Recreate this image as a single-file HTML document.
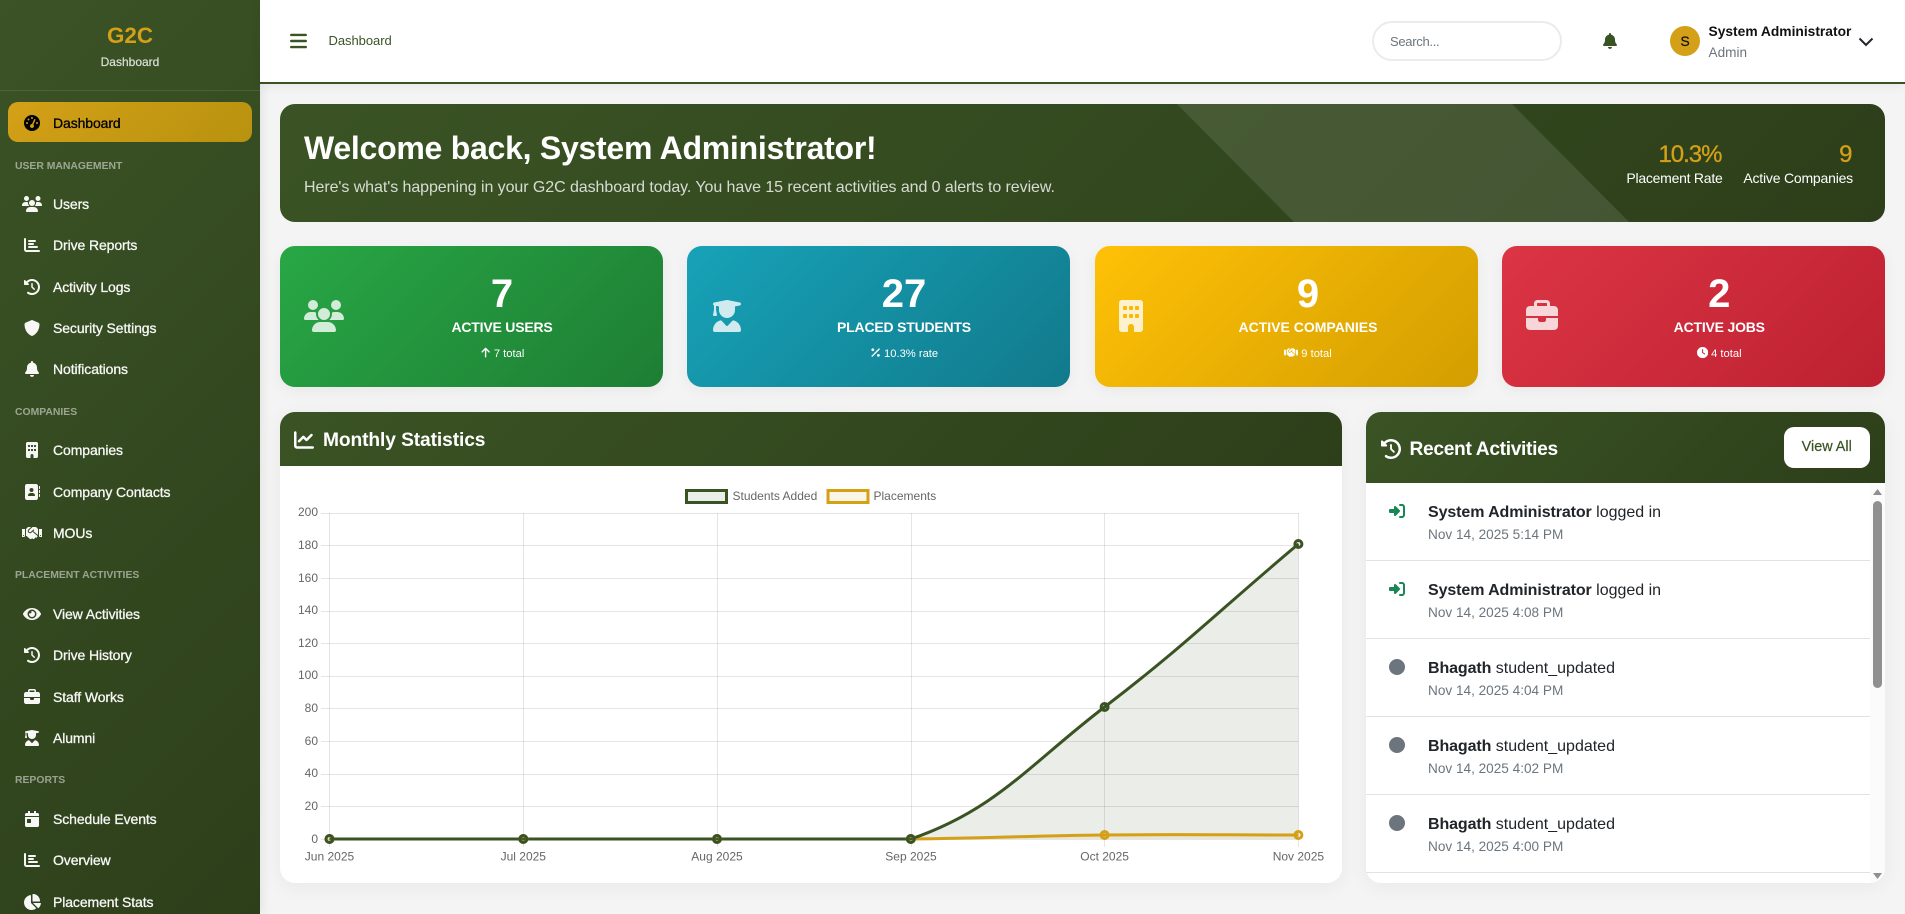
<!DOCTYPE html>
<html lang="en">
<head>
<meta charset="utf-8">
<title>G2C Dashboard</title>
<style>
*{box-sizing:border-box;margin:0;padding:0}
html,body{width:1905px;height:914px;overflow:hidden;background:#f4f4f4;font-family:"Liberation Sans",Arial,sans-serif}
.t{position:absolute;white-space:nowrap;height:20px;line-height:20px}
.side{position:absolute;left:0;top:0;width:260px;height:914px;background:linear-gradient(135deg,#3b5326,#2d3f1a);box-shadow:2px 0 10px rgba(0,0,0,.08);overflow:hidden}
.n{position:absolute;left:0;width:260px;height:20px;color:#fff;font-size:14px;line-height:20px;letter-spacing:-.1px;-webkit-text-stroke:.3px currentColor;opacity:.96}
.n svg{position:absolute;left:22px;top:2px;width:20px;height:16px;fill:currentColor;-webkit-text-stroke:0}
.n span{position:absolute;left:53px;top:0;white-space:nowrap}
.sec{position:absolute;left:15px;color:rgba(255,255,255,.5);font-size:10.4px;font-weight:bold;height:14px;line-height:14px;letter-spacing:0;white-space:nowrap}
.top{position:absolute;left:260px;top:0;width:1645px;height:84px;background:#fff;border-bottom:2px solid #3a5323;box-shadow:0 2px 10px rgba(0,0,0,.06)}
.hero{position:absolute;left:280px;top:104px;width:1605px;height:118px;border-radius:15px;background:linear-gradient(135deg,#3a5324,#2d3f1a);overflow:hidden}
.card{position:absolute;top:246px;width:383.25px;height:141px;border-radius:15px;color:#fff;box-shadow:0 4px 15px rgba(0,0,0,.05)}
.card>svg.ic{position:absolute;top:54px;height:32px;fill:rgba(255,255,255,.8)}
.num{position:absolute;top:28px;left:0;text-align:center;font-size:40px;font-weight:bold;line-height:40px;height:40px}
.lab{position:absolute;top:71px;left:0;text-align:center;font-size:14px;font-weight:bold;line-height:20px;white-space:nowrap;letter-spacing:-.2px}
.sub{position:absolute;top:98px;left:0;text-align:center;font-size:11.2px;line-height:20px;white-space:nowrap}
.sub svg{height:11.2px;width:11.2px;fill:#fff;vertical-align:-1.5px;margin-right:3px}
.panel{position:absolute;background:#fff;border-radius:15px;box-shadow:0 4px 20px rgba(0,0,0,.05);overflow:hidden}
.ph{position:absolute;left:0;top:0;width:100%;background:linear-gradient(135deg,#3a5324,#2d3f1a)}
.name{position:absolute;left:1428px;font-size:16px;color:#212529;white-space:nowrap;height:20px;line-height:20px}
.name b{letter-spacing:-.1px}
.time{position:absolute;left:1428px;font-size:13.6px;color:#6c757d;white-space:nowrap;height:20px;line-height:20px}
.sep{position:absolute;left:1366px;width:504px;height:1px;background:#dfe2e6}
.a-i{position:absolute;left:1389px;width:16px;height:16px;fill:#198754}
.dot{position:absolute;left:1389px;width:16px;height:16px;border-radius:50%;background:#6c757d}
</style>
</head>
<body>
<svg width="0" height="0" style="position:absolute">
<symbol id="gauge" viewBox="0 0 512 512"><path d="M0 256a256 256 0 1 1 512 0A256 256 0 1 1 0 256zM288 96a32 32 0 1 0 -64 0 32 32 0 1 0 64 0zM256 416c35.3 0 64-28.7 64-64c0-17.4-6.9-33.1-18.1-44.6L366 161.7c5.3-12.1-.2-26.3-12.3-31.6s-26.3 .2-31.6 12.3L257.9 288c-.6 0-1.3 0-1.9 0c-35.3 0-64 28.7-64 64s28.7 64 64 64zM176 144a32 32 0 1 0 -64 0 32 32 0 1 0 64 0zM96 288a32 32 0 1 0 0-64 32 32 0 1 0 0 64zm352-32a32 32 0 1 0 -64 0 32 32 0 1 0 64 0z"/></symbol>
<symbol id="users" viewBox="0 0 640 512"><path d="M144 0a80 80 0 1 1 0 160A80 80 0 1 1 144 0zM512 0a80 80 0 1 1 0 160A80 80 0 1 1 512 0zM0 298.7C0 239.8 47.8 192 106.7 192h42.7c15.9 0 31 3.5 44.6 9.7c-1.3 7.2-1.9 14.7-1.9 22.3c0 38.2 16.8 72.5 43.3 96c-.2 0-.4 0-.7 0H21.3C9.6 320 0 310.4 0 298.7zM405.3 320c-.2 0-.4 0-.7 0c26.6-23.5 43.3-57.8 43.3-96c0-7.6-.7-15-1.9-22.3c13.6-6.3 28.7-9.7 44.6-9.7h42.7C592.2 192 640 239.8 640 298.7c0 11.8-9.6 21.3-21.3 21.3H405.3zM224 224a96 96 0 1 1 192 0 96 96 0 1 1 -192 0zM128 485.3C128 411.7 187.7 352 261.3 352H378.7C452.3 352 512 411.7 512 485.3c0 14.7-11.9 26.7-26.7 26.7H154.7c-14.7 0-26.7-11.9-26.7-26.7z"/></symbol>
<symbol id="bars" viewBox="0 0 512 512"><path d="M32 32c17.7 0 32 14.3 32 32V400c0 8.8 7.2 16 16 16H480c17.7 0 32 14.3 32 32s-14.3 32-32 32H80c-44.2 0-80-35.8-80-80V64C0 46.3 14.3 32 32 32zm96 96c0-17.7 14.3-32 32-32l192 0c17.7 0 32 14.3 32 32s-14.3 32-32 32l-192 0c-17.7 0-32-14.3-32-32zm32 64H288c17.7 0 32 14.3 32 32s-14.3 32-32 32H160c-17.7 0-32-14.3-32-32s14.3-32 32-32zm0 96H416c17.7 0 32 14.3 32 32s-14.3 32-32 32H160c-17.7 0-32-14.3-32-32s14.3-32 32-32z"/></symbol>
<symbol id="hist" viewBox="0 0 512 512"><path d="M75 75L41 41C25.9 25.9 0 36.6 0 57.9V168c0 13.3 10.7 24 24 24H134.1c21.4 0 32.1-25.9 17-41l-30.8-30.8C155 85.5 203 64 256 64c106 0 192 86 192 192s-86 192-192 192c-40.8 0-78.6-12.7-109.7-34.4c-14.5-10.1-34.4-6.6-44.6 7.9s-6.6 34.4 7.9 44.6C151.2 495 201.7 512 256 512c141.4 0 256-114.6 256-256S397.4 0 256 0C185.3 0 121.3 28.7 75 75zm181 53c-13.3 0-24 10.7-24 24V256c0 6.4 2.5 12.5 7 17l72 72c9.4 9.4 24.6 9.4 33.9 0s9.4-24.6 0-33.9l-65-65V152c0-13.3-10.7-24-24-24z"/></symbol>
<symbol id="shield" viewBox="0 0 512 512"><path d="M256 0c4.6 0 9.2 1 13.4 2.9L457.7 82.8c22 9.3 38.4 31 38.3 57.2c-.5 99.2-41.3 280.7-213.6 363.2c-16.7 8-36.1 8-52.8 0C57.3 420.7 16.5 239.2 16 140c-.1-26.2 16.3-47.9 38.3-57.2L242.7 2.9C246.8 1 251.4 0 256 0z"/></symbol>
<symbol id="bell" viewBox="0 0 448 512"><path d="M224 0c-17.7 0-32 14.3-32 32V51.2C119 66 64 130.6 64 208v18.8c0 47-17.3 92.4-48.5 127.6l-7.4 8.3c-8.4 9.4-10.4 22.9-5.3 34.4S19.4 416 32 416H416c12.6 0 24-7.4 29.2-18.9s3.1-25-5.3-34.4l-7.4-8.3C401.3 319.2 384 273.9 384 226.8V208c0-77.4-55-142-128-156.8V32c0-17.7-14.3-32-32-32zm45.3 493.3c12-12 18.7-28.3 18.7-45.3H224 160c0 17 6.7 33.3 18.7 45.3s28.3 18.7 45.3 18.7s33.3-6.7 45.3-18.7z"/></symbol>
<symbol id="bld" viewBox="0 0 384 512"><path d="M48 0C21.5 0 0 21.5 0 48V464c0 26.5 21.5 48 48 48h96V432c0-26.5 21.5-48 48-48s48 21.5 48 48v80h96c26.5 0 48-21.5 48-48V48c0-26.5-21.5-48-48-48H48zM64 240c0-8.8 7.2-16 16-16h32c8.8 0 16 7.2 16 16v32c0 8.8-7.2 16-16 16H80c-8.8 0-16-7.2-16-16V240zm112-16h32c8.8 0 16 7.2 16 16v32c0 8.8-7.2 16-16 16H176c-8.8 0-16-7.2-16-16V240c0-8.8 7.2-16 16-16zm80 16c0-8.8 7.2-16 16-16h32c8.8 0 16 7.2 16 16v32c0 8.8-7.2 16-16 16H272c-8.8 0-16-7.2-16-16V240zM80 96h32c8.8 0 16 7.2 16 16v32c0 8.8-7.2 16-16 16H80c-8.8 0-16-7.2-16-16V112c0-8.8 7.2-16 16-16zm80 16c0-8.8 7.2-16 16-16h32c8.8 0 16 7.2 16 16v32c0 8.8-7.2 16-16 16H176c-8.8 0-16-7.2-16-16V112zM272 96h32c8.8 0 16 7.2 16 16v32c0 8.8-7.2 16-16 16H272c-8.8 0-16-7.2-16-16V112c0-8.8 7.2-16 16-16z"/></symbol>
<symbol id="addr" viewBox="0 0 512 512"><path d="M96 0C60.7 0 32 28.7 32 64V448c0 35.3 28.7 64 64 64H384c35.3 0 64-28.7 64-64V64c0-35.3-28.7-64-64-64H96zM208 288h64c44.2 0 80 35.8 80 80c0 8.8-7.2 16-16 16H144c-8.8 0-16-7.2-16-16c0-44.2 35.8-80 80-80zm-32-96a64 64 0 1 1 128 0 64 64 0 1 1 -128 0zM512 80c0-8.8-7.2-16-16-16s-16 7.2-16 16v64c0 8.8 7.2 16 16 16s16-7.2 16-16V80zM496 192c-8.8 0-16 7.2-16 16v64c0 8.8 7.2 16 16 16s16-7.2 16-16V208c0-8.8-7.2-16-16-16zm16 144c0-8.8-7.2-16-16-16s-16 7.2-16 16v64c0 8.8 7.2 16 16 16s16-7.2 16-16V336z"/></symbol>
<symbol id="hand" viewBox="0 0 640 512"><path d="M434.7 64h-85.9c-8 0-15.7 3-21.6 8.4l-98.3 90c-.1.1-.2.3-.3.4-16.6 15.6-16.3 40.5-2.1 56 12.7 13.9 39.4 17.6 56.1 2.7.1-.1.3-.1.4-.2l79.9-73.2c6.5-5.9 16.7-5.5 22.6 1 6 6.5 5.5 16.6-1 22.6l-26.1 23.9L504 313.8c2.9 2.4 5.5 5 7.9 7.7V128l-54.6-54.6c-5.9-6-14.1-9.4-22.6-9.4zM544 128.2v223.9c0 17.7 14.3 32 32 32h64V128.2h-96zm48 223.9c-8.8 0-16-7.2-16-16s7.2-16 16-16 16 7.2 16 16-7.2 16-16 16zM0 384h64c17.7 0 32-14.3 32-32V128.2H0V384zm48-63.9c8.8 0 16 7.2 16 16s-7.2 16-16 16-16-7.2-16-16c0-8.9 7.2-16 16-16zm435.9 18.6L334.6 217.5l-30 27.5c-29.7 27.1-75.2 24.5-101.7-4.4-26.9-29.4-24.8-74.9 4.4-101.7L289.1 64h-83.8c-8.5 0-16.6 3.4-22.6 9.4L128 128v223.9h18.3l90.5 81.9c27.4 22.3 67.7 18.1 90-9.3l.2-.2 17.9 15.5c15.9 13 39.4 10.5 52.3-5.4l31.4-38.6 5.4 4.4c13.7 11.1 33.9 9.1 45-4.7l9.5-11.7c11.2-13.8 9.1-33.9-4.6-45.1z"/></symbol>
<symbol id="eye" viewBox="0 0 576 512"><path d="M572.52 241.4C518.29 135.59 410.93 64 288 64S57.68 135.64 3.48 241.41a32.35 32.35 0 0 0 0 29.19C57.71 376.41 165.07 448 288 448s230.32-71.64 284.52-177.41a32.35 32.35 0 0 0 0-29.19zM288 400a144 144 0 1 1 144-144 143.93 143.93 0 0 1-144 144zm0-240a95.31 95.31 0 0 0-25.31 3.79 47.85 47.85 0 0 1-66.9 66.9A95.78 95.78 0 1 0 288 160z"/></symbol>
<symbol id="brief" viewBox="0 0 512 512"><path d="M184 48H328c4.4 0 8 3.6 8 8V96H176V56c0-4.4 3.6-8 8-8zm-56 8V96H64C28.7 96 0 124.7 0 160v96H192 320 512V160c0-35.3-28.7-64-64-64H384V56c0-30.9-25.1-56-56-56H184c-30.9 0-56 25.1-56 56zM512 288H320v32c0 17.7-14.3 32-32 32H224c-17.7 0-32-14.3-32-32V288H0V416c0 35.3 28.7 64 64 64H448c35.3 0 64-28.7 64-64V288z"/></symbol>
<symbol id="grad" viewBox="0 0 448 512"><path d="M219.3 .5c3.1-.6 6.3-.6 9.4 0l200 40C439.9 42.7 448 52.6 448 64s-8.1 21.3-19.3 23.5L352 102.9V160c0 70.7-57.3 128-128 128s-128-57.3-128-128V102.9L48 93.3v65.1l15.7 78.4c.9 4.7-.3 9.6-3.3 13.3s-7.6 5.9-12.4 5.9H16c-4.8 0-9.3-2.1-12.4-5.9s-4.3-8.6-3.3-13.3L16 158.4V86.6C6.5 83.3 0 74.3 0 64C0 52.6 8.1 42.7 19.3 40.5l200-40zM111.9 327.7c10.5-3.4 21.8 .4 29.4 8.5l71 75.5c6.3 6.7 17 6.7 23.3 0l71-75.5c7.6-8.1 18.9-11.9 29.4-8.5C401 348.6 448 409.4 448 481.3c0 17-13.8 30.7-30.7 30.7H30.7C13.8 512 0 498.2 0 481.3c0-71.9 47-132.7 111.9-153.6z"/></symbol>
<symbol id="cal" viewBox="0 0 448 512"><path d="M0 464c0 26.5 21.5 48 48 48h352c26.5 0 48-21.5 48-48V192H0v272zm64-192c0-8.8 7.2-16 16-16h96c8.8 0 16 7.2 16 16v96c0 8.8-7.2 16-16 16H80c-8.8 0-16-7.2-16-16v-96zM400 64h-48V16c0-8.8-7.2-16-16-16h-32c-8.8 0-16 7.2-16 16v48H160V16c0-8.8-7.2-16-16-16h-32c-8.8 0-16 7.2-16 16v48H48C21.5 64 0 85.5 0 112v48h448v-48c0-26.5-21.5-48-48-48z"/></symbol>
<symbol id="pie" viewBox="0 0 576 512"><path d="M304 240V16.6c0-9 7-16.6 16-16.6C443.7 0 544 100.3 544 224c0 9-7.6 16-16.6 16H304zM32 272C32 150.7 122.1 50.3 239 34.3c9.2-1.3 17 6.1 17 15.4V288L412.5 444.5c6.7 6.7 6.2 17.7-1.5 23.1C371.8 495.6 323.8 512 272 512C139.5 512 32 404.6 32 272zm526.4 16c9.3 0 16.6 7.8 15.4 17c-7.7 55.9-34.6 105.6-73.9 142.3c-6 5.6-15.4 5.2-21.2-.7L320 288H558.4z"/></symbol>
<symbol id="line" viewBox="0 0 512 512"><path d="M64 64c0-17.7-14.3-32-32-32S0 46.3 0 64V400c0 44.2 35.8 80 80 80H480c17.7 0 32-14.3 32-32s-14.3-32-32-32H80c-8.8 0-16-7.2-16-16V64zm406.6 86.6c12.5-12.5 12.5-32.8 0-45.3s-32.8-12.5-45.3 0L320 210.7l-57.4-57.4c-12.5-12.5-32.8-12.5-45.3 0l-112 112c-12.5 12.5-12.5 32.8 0 45.3s32.8 12.5 45.3 0L240 221.3l57.4 57.4c12.5 12.5 32.8 12.5 45.3 0l128-128z"/></symbol>
<symbol id="up" viewBox="0 0 384 512"><path d="M214.6 41.4c-12.5-12.5-32.8-12.5-45.3 0l-160 160c-12.5 12.5-12.5 32.8 0 45.3s32.8 12.5 45.3 0L160 141.2V448c0 17.7 14.3 32 32 32s32-14.3 32-32V141.2L329.4 246.6c12.5 12.5 32.8 12.5 45.3 0s12.5-32.8 0-45.3l-160-160z"/></symbol>
<symbol id="pct" viewBox="0 0 384 512"><path d="M374.6 118.6c12.5-12.5 12.5-32.8 0-45.3s-32.8-12.5-45.3 0l-320 320c-12.5 12.5-12.5 32.8 0 45.3s32.8 12.5 45.3 0l320-320zM128 128A64 64 0 1 0 0 128a64 64 0 1 0 128 0zM384 384a64 64 0 1 0 -128 0 64 64 0 1 0 128 0z"/></symbol>
<symbol id="clock" viewBox="0 0 512 512"><path d="M256 0a256 256 0 1 1 0 512A256 256 0 1 1 256 0zM232 120V256c0 8 4 15.5 10.7 20l96 64c11 7.4 25.9 4.4 33.3-6.7s4.4-25.9-6.7-33.3L280 243.2V120c0-13.3-10.7-24-24-24s-24 10.7-24 24z"/></symbol>
<symbol id="signin" viewBox="0 0 512 512"><path d="M217.9 105.9L340.7 228.7c7.2 7.2 11.3 17.1 11.3 27.3s-4.1 20.1-11.3 27.3L217.9 406.1c-6.4 6.4-15 9.9-24 9.9c-18.7 0-33.9-15.2-33.9-33.9l0-62.1L32 320c-17.7 0-32-14.3-32-32l0-64c0-17.7 14.3-32 32-32l128 0 0-62.1c0-18.7 15.2-33.9 33.9-33.9c9 0 17.6 3.6 24 9.9zM352 416l64 0c17.7 0 32-14.3 32-32l0-256c0-17.7-14.3-32-32-32l-64 0c-17.7 0-32-14.3-32-32s14.3-32 32-32l64 0c53 0 96 43 96 96l0 256c0 53-43 96-96 96l-64 0c-17.7 0-32-14.3-32-32s14.3-32 32-32z"/></symbol>
<symbol id="menu" viewBox="0 0 448 512"><path d="M0 96C0 78.3 14.3 64 32 64H416c17.7 0 32 14.3 32 32s-14.3 32-32 32H32C14.3 128 0 113.7 0 96zM0 256c0-17.7 14.3-32 32-32H416c17.7 0 32 14.3 32 32s-14.3 32-32 32H32c-17.7 0-32-14.3-32-32zM448 416c0 17.7-14.3 32-32 32H32c-17.7 0-32-14.3-32-32s14.3-32 32-32H416c17.7 0 32 14.3 32 32z"/></symbol>
</svg>

<!-- Sidebar -->
<div class="side">
  <div class="t" style="left:0;width:260px;top:22.500px;height:26px;line-height:26px;text-align:center;color:#d4a017;font-size:22.400px;font-weight:bold">G2C</div>
  <div class="t" style="left:0;width:260px;top:52px;text-align:center;color:rgba(255,255,255,.8);font-size:12px;-webkit-text-stroke:.2px rgba(255,255,255,.7)">Dashboard</div>
  <div style="position:absolute;left:0;top:90px;width:260px;height:1px;background:rgba(255,255,255,.1)"></div>
  <div style="position:absolute;left:8px;top:102px;width:244px;height:40px;border-radius:10px;background:linear-gradient(135deg,#d4a017,#b8920f)"></div>
  <div class="n" style="top:113px;color:#000;opacity:1"><svg><use href="#gauge"/></svg><span>Dashboard</span></div>
  <div class="sec" style="top:160px">USER MANAGEMENT</div>
  <div class="n" style="top:194px"><svg><use href="#users"/></svg><span>Users</span></div>
  <div class="n" style="top:235px"><svg><use href="#bars"/></svg><span>Drive Reports</span></div>
  <div class="n" style="top:277px"><svg><use href="#hist"/></svg><span>Activity Logs</span></div>
  <div class="n" style="top:318px"><svg><use href="#shield"/></svg><span>Security Settings</span></div>
  <div class="n" style="top:359px"><svg><use href="#bell"/></svg><span>Notifications</span></div>
  <div class="sec" style="top:406px">COMPANIES</div>
  <div class="n" style="top:440px"><svg><use href="#bld"/></svg><span>Companies</span></div>
  <div class="n" style="top:482px"><svg><use href="#addr"/></svg><span>Company Contacts</span></div>
  <div class="n" style="top:523px"><svg><use href="#hand"/></svg><span>MOUs</span></div>
  <div class="sec" style="top:569px">PLACEMENT ACTIVITIES</div>
  <div class="n" style="top:604px"><svg><use href="#eye"/></svg><span>View Activities</span></div>
  <div class="n" style="top:645px"><svg><use href="#hist"/></svg><span>Drive History</span></div>
  <div class="n" style="top:687px"><svg><use href="#brief"/></svg><span>Staff Works</span></div>
  <div class="n" style="top:728px"><svg><use href="#grad"/></svg><span>Alumni</span></div>
  <div class="sec" style="top:774px">REPORTS</div>
  <div class="n" style="top:809px"><svg><use href="#cal"/></svg><span>Schedule Events</span></div>
  <div class="n" style="top:850px"><svg><use href="#bars"/></svg><span>Overview</span></div>
  <div class="n" style="top:892px"><svg><use href="#pie"/></svg><span>Placement Stats</span></div>
</div>

<!-- Top bar -->
<div class="top"></div>
<svg style="position:absolute;left:290px;top:31px;width:17px;height:20px;fill:#3a5323"><use href="#menu"/></svg>
<div class="t" style="left:328.500px;top:31px;font-size:13px;color:#3a5323;letter-spacing:-.05px">Dashboard</div>
<div style="position:absolute;left:1372px;top:21px;width:190px;height:40px;border:2px solid #e9ecef;border-radius:20px;background:#fff"></div>
<div class="t" style="left:1390px;top:32px;font-size:13px;letter-spacing:-.3px;color:#6c757d">Search...</div>
<svg style="position:absolute;left:1603px;top:33px;width:14px;height:16px;fill:#3a5323"><use href="#bell"/></svg>
<div style="position:absolute;left:1670px;top:26px;width:30px;height:30px;border-radius:50%;background:#d4a017;color:#111;font-size:14px;line-height:30px;text-align:center;-webkit-text-stroke:.2px #111">S</div>
<div class="t" style="left:1708.500px;top:22px;font-size:13.800px;font-weight:bold;color:#111">System Administrator</div>
<div class="t" style="left:1708.500px;top:42.500px;font-size:13.600px;color:#6c757d">Admin</div>
<svg style="position:absolute;left:1858px;top:36px;width:16px;height:12px" fill="none" stroke="#212529" stroke-width="2"><path d="M1.500 2.500 8 9l6.500-6.500"/></svg>

<!-- Hero -->
<div class="hero">
  <svg style="position:absolute;left:0;top:0" width="1605" height="118"><path d="M897 0H1232L1349 118H1014Z" fill="rgba(255,255,255,.1)"/></svg>
</div>
<div class="t" style="left:304px;top:129px;height:38px;line-height:38px;font-size:32px;font-weight:bold;color:#fff;letter-spacing:-.26px">Welcome back, System Administrator!</div>
<div class="t" style="left:304px;top:177.500px;font-size:16px;color:rgba(255,255,255,.8);letter-spacing:-.07px">Here's what's happening in your G2C dashboard today. You have 15 recent activities and 0 alerts to review.</div>
<div class="t" style="right:183.500px;top:140.500px;height:28px;line-height:28px;font-size:24px;letter-spacing:-1px;color:#d4a017;-webkit-text-stroke:.3px #d4a017">10.3%</div>
<div class="t" style="right:182.500px;top:168px;font-size:14px;color:#fff;letter-spacing:-.25px">Placement Rate</div>
<div class="t" style="right:52.500px;top:140.500px;height:28px;line-height:28px;font-size:24px;color:#d4a017;-webkit-text-stroke:.3px #d4a017">9</div>
<div class="t" style="right:52px;top:168px;font-size:14px;color:#fff;letter-spacing:-.2px">Active Companies</div>

<!-- Stat cards -->
<div class="card" style="left:280px;background:linear-gradient(135deg,#28a745,#1e7e34)">
  <svg class="ic" style="left:24px;width:40px"><use href="#users"/></svg>
  <div class="num" style="width:444px">7</div>
  <div class="lab" style="width:444px">ACTIVE USERS</div>
  <div class="sub" style="width:444px"><svg><use href="#up"/></svg>7 total</div>
</div>
<div class="card" style="left:687px;background:linear-gradient(135deg,#17a2b8,#117a8b)">
  <svg class="ic" style="left:26px;width:28px"><use href="#grad"/></svg>
  <div class="num" style="width:434px">27</div>
  <div class="lab" style="width:434px">PLACED STUDENTS</div>
  <div class="sub" style="width:434px"><svg><use href="#pct"/></svg>10.3% rate</div>
</div>
<div class="card" style="left:1095px;background:linear-gradient(135deg,#ffc107,#d39e00)">
  <svg class="ic" style="left:24px;width:24px"><use href="#bld"/></svg>
  <div class="num" style="width:426px">9</div>
  <div class="lab" style="width:426px;letter-spacing:0">ACTIVE COMPANIES</div>
  <div class="sub" style="width:426px"><svg style="width:14px"><use href="#hand"/></svg>9 total</div>
</div>
<div class="card" style="left:1501.750px;background:linear-gradient(135deg,#dc3545,#bd2130)">
  <svg class="ic" style="left:24px;width:32px"><use href="#brief"/></svg>
  <div class="num" style="width:435px">2</div>
  <div class="lab" style="width:435px">ACTIVE JOBS</div>
  <div class="sub" style="width:435px"><svg><use href="#clock"/></svg>4 total</div>
</div>

<!-- Chart panel -->
<div class="panel" style="left:280px;top:412px;width:1062px;height:471px">
  <div class="ph" style="height:54px"></div>
</div>
<svg style="position:absolute;left:294px;top:430px;width:20px;height:20px;fill:#fff"><use href="#line"/></svg>
<div class="t" style="left:323px;top:429.500px;height:22px;line-height:22px;font-size:19.200px;font-weight:bold;color:#fff;letter-spacing:-.1px">Monthly Statistics</div>

<svg style="position:absolute;left:0;top:0;pointer-events:none" width="1905" height="914">
  <g stroke="rgba(0,0,0,.1)" stroke-width="1" fill="none">
    <path d="M321 513.500H1298.500M321 545.500H1298.500M321 578.500H1298.500M321 611.500H1298.500M321 643.500H1298.500M321 676.500H1298.500M321 708.500H1298.500M321 741.500H1298.500M321 774.500H1298.500M321 806.500H1298.500M321 839.500H1298.500"/>
    <path d="M329.500 513V847M523.500 513V847M717.500 513V847M911.500 513V847M1104.500 513V847M1298.500 513V847"/>
  </g>
  <path d="M329.500 839L910.800 839C995.700 810.100 1030.200 763.800 1104.600 707C1185.200 645.400 1220.900 609 1298.400 544L1298.400 839Z" fill="rgba(58,83,35,.1)"/>
  <path d="M329.500 839L910.800 839C988.300 838.200 1027.100 835.800 1104.600 835C1182.100 834.200 1220.900 835 1298.400 835L1298.400 839Z" fill="rgba(212,160,23,.1)"/>
  <path d="M329.500 839L910.800 839C988.300 838.200 1027.100 835.800 1104.600 835C1182.100 834.200 1220.900 835 1298.400 835" fill="none" stroke="#d4a017" stroke-width="3"/>
  <path d="M329.500 839L910.800 839C995.700 810.100 1030.200 763.800 1104.600 707C1185.200 645.400 1220.900 609 1298.400 544" fill="none" stroke="#3a5323" stroke-width="3"/>
  <g fill="rgba(212,160,23,.1)" stroke="#d4a017" stroke-width="3">
    <circle cx="329.500" cy="839" r="3.500"/><circle cx="523.300" cy="839" r="3.500"/><circle cx="717" cy="839" r="3.500"/><circle cx="910.800" cy="839" r="3.500"/><circle cx="1104.600" cy="835" r="3.500"/><circle cx="1298.400" cy="835" r="3.500"/>
  </g>
  <g fill="rgba(58,83,35,.1)" stroke="#3a5323" stroke-width="3">
    <circle cx="329.500" cy="839" r="3.500"/><circle cx="523.300" cy="839" r="3.500"/><circle cx="717" cy="839" r="3.500"/><circle cx="910.800" cy="839" r="3.500"/><circle cx="1104.600" cy="707" r="3.500"/><circle cx="1298.400" cy="544" r="3.500"/>
  </g>
  <g font-family="Liberation Sans, Arial, sans-serif" font-size="12" fill="#666">
    <g text-anchor="end">
      <text x="318" y="516">200</text><text x="318" y="549">180</text><text x="318" y="582">160</text><text x="318" y="614">140</text><text x="318" y="647">120</text><text x="318" y="679">100</text><text x="318" y="712">80</text><text x="318" y="745">60</text><text x="318" y="777">40</text><text x="318" y="810">20</text><text x="318" y="843">0</text>
    </g>
    <g text-anchor="middle">
      <text x="329.500" y="860.500">Jun 2025</text><text x="523.300" y="860.500">Jul 2025</text><text x="717" y="860.500">Aug 2025</text><text x="911" y="860.500">Sep 2025</text><text x="1104.600" y="860.500">Oct 2025</text><text x="1298.400" y="860.500">Nov 2025</text>
    </g>
    <text x="732.500" y="500">Students Added</text>
    <text x="873.500" y="500">Placements</text>
  </g>
  <rect x="686.500" y="490.500" width="40" height="12" fill="rgba(58,83,35,.1)" stroke="#3a5323" stroke-width="3"/>
  <rect x="828" y="490.500" width="40" height="12" fill="rgba(212,160,23,.1)" stroke="#d4a017" stroke-width="3"/>
</svg>

<!-- Recent activities -->
<div class="panel" style="left:1366px;top:412px;width:519px;height:471px">
  <div class="ph" style="height:71px"></div>
</div>
<svg style="position:absolute;left:1381px;top:439px;width:20px;height:20px;fill:#fff"><use href="#hist"/></svg>
<div class="t" style="left:1409.500px;top:438.500px;height:22px;line-height:22px;font-size:19.200px;font-weight:bold;color:#fff;letter-spacing:-.33px">Recent Activities</div>
<div style="position:absolute;left:1783.500px;top:427px;width:86.500px;height:41px;background:#fff;border-radius:10px;color:#3a5323;font-size:14.400px;line-height:41px;text-align:center;-webkit-text-stroke:.2px #3a5323">View All</div>

<svg class="a-i" style="top:503px"><use href="#signin"/></svg>
<div class="name" style="top:502.500px"><b>System Administrator</b> logged in</div>
<div class="time" style="top:524.800px">Nov 14, 2025 5:14 PM</div>
<div class="sep" style="top:560px"></div>

<svg class="a-i" style="top:581px"><use href="#signin"/></svg>
<div class="name" style="top:580.500px"><b>System Administrator</b> logged in</div>
<div class="time" style="top:602.800px">Nov 14, 2025 4:08 PM</div>
<div class="sep" style="top:638px"></div>

<div class="dot" style="top:659px"></div>
<div class="name" style="top:658.500px"><b>Bhagath</b> student_updated</div>
<div class="time" style="top:680.800px">Nov 14, 2025 4:04 PM</div>
<div class="sep" style="top:716px"></div>

<div class="dot" style="top:737px"></div>
<div class="name" style="top:736.500px"><b>Bhagath</b> student_updated</div>
<div class="time" style="top:758.800px">Nov 14, 2025 4:02 PM</div>
<div class="sep" style="top:794px"></div>

<div class="dot" style="top:815px"></div>
<div class="name" style="top:814.500px"><b>Bhagath</b> student_updated</div>
<div class="time" style="top:836.800px">Nov 14, 2025 4:00 PM</div>
<div class="sep" style="top:872px"></div>

<!-- Scrollbar -->
<div style="position:absolute;left:1870px;top:483px;width:15px;height:400px;background:#fbfbfb;border-radius:0 0 15px 0"></div>
<div style="position:absolute;left:1873px;top:501px;width:9px;height:187px;border-radius:5px;background:#8f8f8f"></div>
<svg style="position:absolute;left:1872px;top:488px" width="11" height="8"><path d="M5.500 1 10 7H1Z" fill="#8f8f8f"/></svg>
<svg style="position:absolute;left:1872px;top:872px" width="11" height="8"><path d="M1 1H10L5.500 7Z" fill="#8f8f8f"/></svg>
</body>
</html>
